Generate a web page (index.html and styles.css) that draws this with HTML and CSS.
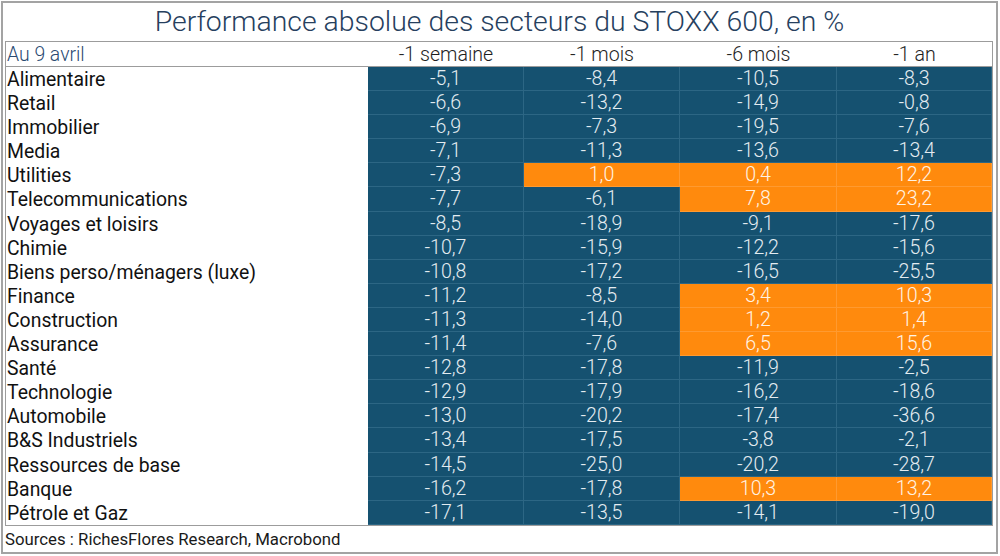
FILE: index.html
```html
<!DOCTYPE html>
<html lang="fr">
<head>
<meta charset="utf-8">
<title>Performance absolue des secteurs du STOXX 600</title>
<link rel="stylesheet" href="styles.css">
</head>
<body>
<div class="frame">
  <h1 class="title">Performance absolue des secteurs du STOXX 600, en %</h1>
  <div class="table">
    <div class="hdr lab">Au 9 avril</div>
    <div class="hdr">-1 semaine</div>
    <div class="hdr">-1 mois</div>
    <div class="hdr">-6 mois</div>
    <div class="hdr">-1 an</div>

    <div class="lab">Alimentaire</div><div class="c">-5,1</div><div class="c">-8,4</div><div class="c">-10,5</div><div class="c">-8,3</div>
    <div class="lab">Retail</div><div class="c">-6,6</div><div class="c">-13,2</div><div class="c">-14,9</div><div class="c">-0,8</div>
    <div class="lab">Immobilier</div><div class="c">-6,9</div><div class="c">-7,3</div><div class="c">-19,5</div><div class="c">-7,6</div>
    <div class="lab">Media</div><div class="c">-7,1</div><div class="c">-11,3</div><div class="c">-13,6</div><div class="c">-13,4</div>
    <div class="lab">Utilities</div><div class="c">-7,3</div><div class="c o">1,0</div><div class="c o">0,4</div><div class="c o">12,2</div>
    <div class="lab">Telecommunications</div><div class="c">-7,7</div><div class="c">-6,1</div><div class="c o">7,8</div><div class="c o">23,2</div>
    <div class="lab">Voyages et loisirs</div><div class="c">-8,5</div><div class="c">-18,9</div><div class="c">-9,1</div><div class="c">-17,6</div>
    <div class="lab">Chimie</div><div class="c">-10,7</div><div class="c">-15,9</div><div class="c">-12,2</div><div class="c">-15,6</div>
    <div class="lab">Biens perso/ménagers (luxe)</div><div class="c">-10,8</div><div class="c">-17,2</div><div class="c">-16,5</div><div class="c">-25,5</div>
    <div class="lab">Finance</div><div class="c">-11,2</div><div class="c">-8,5</div><div class="c o">3,4</div><div class="c o">10,3</div>
    <div class="lab">Construction</div><div class="c">-11,3</div><div class="c">-14,0</div><div class="c o">1,2</div><div class="c o">1,4</div>
    <div class="lab">Assurance</div><div class="c">-11,4</div><div class="c">-7,6</div><div class="c o">6,5</div><div class="c o">15,6</div>
    <div class="lab">Santé</div><div class="c">-12,8</div><div class="c">-17,8</div><div class="c">-11,9</div><div class="c">-2,5</div>
    <div class="lab">Technologie</div><div class="c">-12,9</div><div class="c">-17,9</div><div class="c">-16,2</div><div class="c">-18,6</div>
    <div class="lab">Automobile</div><div class="c">-13,0</div><div class="c">-20,2</div><div class="c">-17,4</div><div class="c">-36,6</div>
    <div class="lab">B&amp;S Industriels</div><div class="c">-13,4</div><div class="c">-17,5</div><div class="c">-3,8</div><div class="c">-2,1</div>
    <div class="lab">Ressources de base</div><div class="c">-14,5</div><div class="c">-25,0</div><div class="c">-20,2</div><div class="c">-28,7</div>
    <div class="lab">Banque</div><div class="c">-16,2</div><div class="c">-17,8</div><div class="c o">10,3</div><div class="c o">13,2</div>
    <div class="lab">Pétrole et Gaz</div><div class="c">-17,1</div><div class="c">-13,5</div><div class="c">-14,1</div><div class="c">-19,0</div>
  </div>
  <div class="sources">Sources : RichesFlores Research, Macrobond</div>
</div>
</body>
</html>
```

FILE: styles.css
```css
html, body {
  margin: 0;
  padding: 0;
  background: #ffffff;
}
body {
  font-family: Roboto, "Liberation Sans", sans-serif;
  width: 1000px;
  height: 556px;
  overflow: hidden;
}
.frame {
  box-sizing: border-box;
  margin: 1px 0 0 1px;
  width: 997px;
  height: 553px;
  border: 2px solid #a3a3a3;
  padding: 0 2px 0 2px;
  display: flex;
  flex-direction: column;
}
.title {
  margin: 0;
  height: 38px;
  line-height: 38px;
  font-size: 28.4px;
  font-weight: 300;
  color: #26405e;
  text-align: center;
}
.table {
  box-sizing: border-box;
  width: 988px;
  border: 1px solid #9c9c9c;
  display: grid;
  grid-template-columns: 362px 156px 156px 157px 155px;
  grid-template-rows: 25px repeat(19, 24.1px);
}
.hdr {
  border-bottom: 1px solid #9c9c9c;
  font-size: 19.6px;
  font-weight: 300;
  color: #1e1e1e;
  text-align: center;
  line-height: 25px;
}
.hdr.lab {
  text-align: left;
  color: #2a4a72;
  padding-left: 1px;
}
.lab {
  font-size: 19.4px;
  color: #111111;
  line-height: 25px;
  padding-left: 1px;
  white-space: nowrap;
}
.c {
  box-sizing: border-box;
  background: #155170;
  color: #e4ecf1;
  font-size: 19.6px;
  font-weight: 300;
  text-align: center;
  line-height: 24px;
  border-right: 1px solid #2c6684;
  border-bottom: 1px solid #2c6684;
}
.c.o {
  background: #ff8a0d;
  color: #fff3e4;
  border-right: 1px solid #ff9a30;
  border-bottom: 1px solid #ff9a30;
}
.sources {
  font-size: 16.8px;
  color: #1a1a1a;
  line-height: 25px;
  margin-top: 1px;
}
```
